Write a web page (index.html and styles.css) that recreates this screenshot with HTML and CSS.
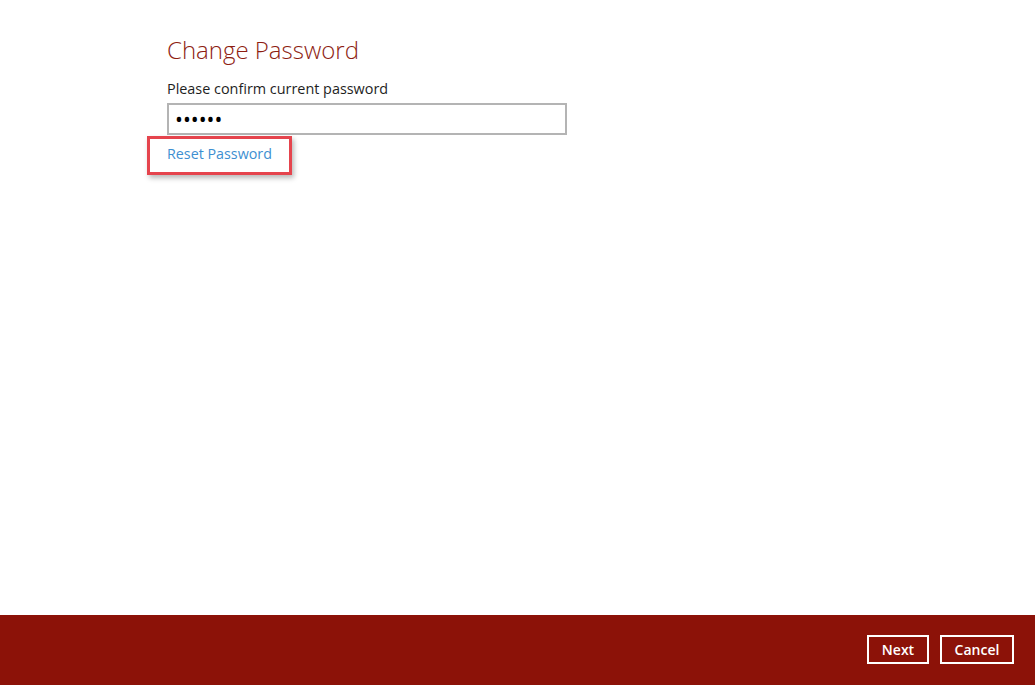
FILE: index.html
```html
<!DOCTYPE html>
<html lang="en">
<head>
<meta charset="utf-8">
<title>Change Password</title>
<link rel="stylesheet" href="styles.css">
</head>
<body>
<div class="page">
  <main class="content">
    <h1 class="title">Change Password</h1>
    <label class="label" for="pw">Please confirm current password</label>
    <input class="field" id="pw" type="password" value="secret">
    <div class="highlight">
      <a class="link" href="#">Reset Password</a>
    </div>
  </main>
  <footer class="footer">
    <button class="btn btn-next" type="button">Next</button>
    <button class="btn btn-cancel" type="button">Cancel</button>
  </footer>
</div>
</body>
</html>
```

FILE: styles.css
```css
html, body {
  margin: 0;
  padding: 0;
  background: #ffffff;
}

body {
  font-family: "Open Sans", "Noto Sans", sans-serif;
  color: #222222;
}

.page {
  width: 1035px;
  height: 685px;
  display: flex;
  flex-direction: column;
}

.content {
  flex: 1;
  display: flex;
  flex-direction: column;
  align-items: flex-start;
  padding: 34px 0 0 167px;
}

.title {
  margin: 0;
  font-size: 24px;
  line-height: 32px;
  font-weight: 300;
  color: #8e1d12;
}

.label {
  margin-top: 13px;
  font-size: 14.4px;
  line-height: 20px;
  color: #1e1e1e;
}

.field {
  margin: 4px 0 0;
  width: 400px;
  height: 32px;
  box-sizing: border-box;
  border: 2px solid #b4b4b4;
  padding: 0 6px;
  font-family: "Open Sans", "Noto Sans", sans-serif;
  font-size: 21px;
  letter-spacing: 0;
  color: #000000;
  background: #ffffff;
  outline: none;
}

.highlight {
  margin: 1px 0 0 -20px;
  border: 3px solid #e5444d;
  padding: 5px 17px 8px 17px;
  box-shadow: 2px 3px 5px rgba(0, 0, 0, 0.28);
}

.link {
  display: block;
  font-size: 14.3px;
  line-height: 20px;
  color: #3d8fd1;
  text-decoration: none;
}

.footer {
  height: 70px;
  background: #8c1208;
  display: flex;
  justify-content: flex-end;
  align-items: flex-start;
  gap: 11px;
  padding: 20px 21px 0 0;
  box-sizing: border-box;
}

.btn {
  height: 29px;
  box-sizing: border-box;
  border: 2px solid #ffffff;
  background: transparent;
  color: #ffffff;
  font-family: "Open Sans", "Noto Sans", sans-serif;
  font-size: 14px;
  font-weight: 600;
  padding: 0;
  cursor: pointer;
}

.btn-next {
  width: 62px;
}

.btn-cancel {
  width: 74px;
}
```
